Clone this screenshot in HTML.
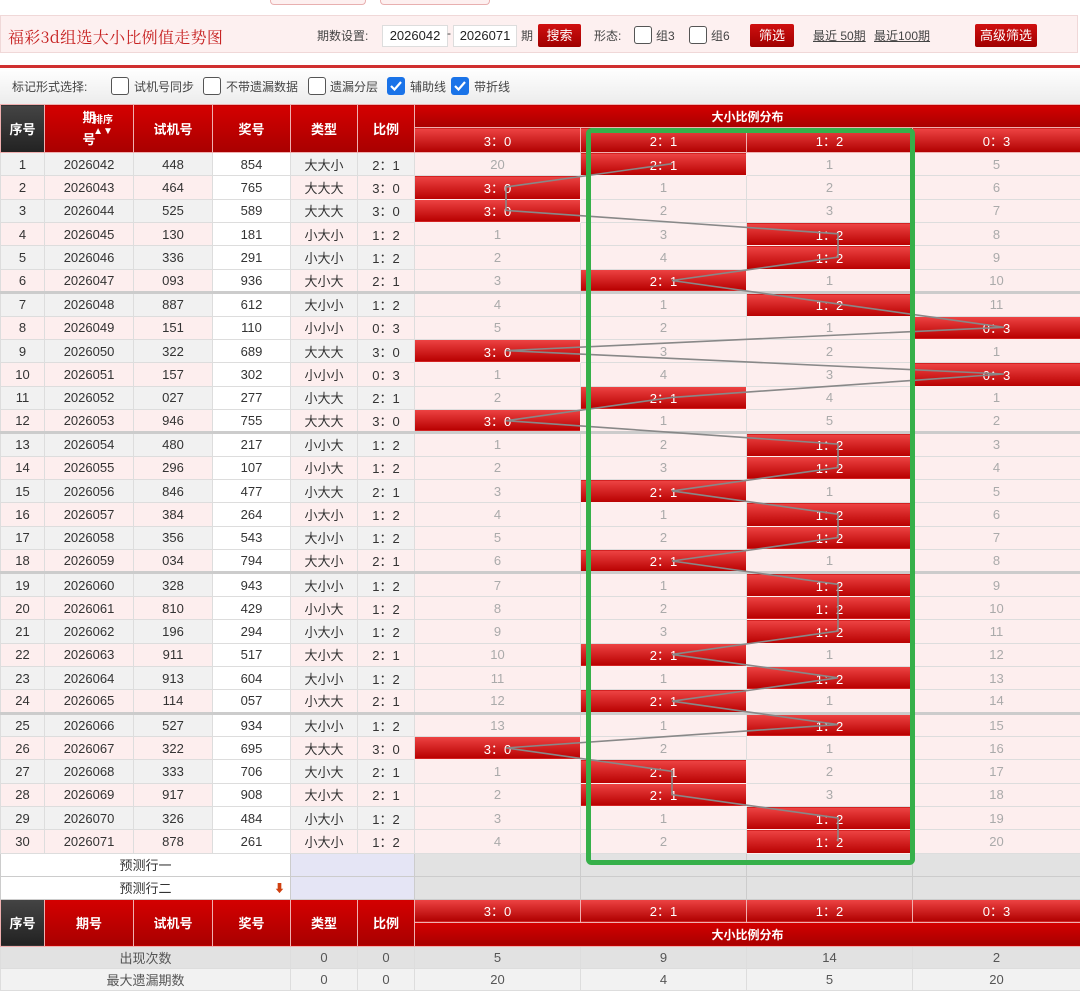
<!DOCTYPE html>
<html><head><meta charset="utf-8">
<style>
*{margin:0;padding:0;box-sizing:border-box}
body{width:1080px;height:986px;overflow:hidden;background:#fff;font-family:"Liberation Sans","Noto Sans CJK SC",sans-serif;position:relative;font-size:13px;color:#333}
.tab{position:absolute;top:0;height:5px;border:1px solid #e8b0b0;border-top:none;border-radius:0 0 4px 4px;background:#fdf0f0}
.bar{position:absolute;left:0;top:15px;width:1078px;height:38px;background:#fdf0f0;border:1px solid #f0d8d8}
.title{position:absolute;left:7px;top:9px;font-size:16px;color:#c62020;font-family:"Noto Serif CJK SC",serif;letter-spacing:0.3px}
.lbl{position:absolute;top:11px;font-size:12px;color:#444}
.inp{position:absolute;top:9px;height:22px;background:#fff;border:1px solid #ddd;font-size:13px;text-align:center;line-height:20px;color:#222}
.btn{position:absolute;top:8px;height:23px;background:linear-gradient(#d01010,#a00000);color:#fff;font-size:13px;text-align:center;line-height:23px;border-radius:2px}
.cb{position:absolute;width:18px;height:18px;border:1.5px solid #555;border-radius:3px;background:#fff}
.cbk{position:absolute;width:18px;height:18px;border-radius:3px;background:#1a73e8}
.redline{position:absolute;left:0;top:65px;width:1080px;height:3px;background:#d03030}
.mark{position:absolute;left:0;top:68px;width:1080px;height:36px;background:linear-gradient(#fff,#ececec)}
table{position:absolute;left:0;border-collapse:collapse;table-layout:fixed;width:1080px}
td{text-align:center;border:1px solid #ddd;font-size:13px;color:#333;white-space:nowrap;overflow:hidden;padding:0}
tr.o td{background:#f1f1f1}
tr.e td{background:#fdeeee}
tr td.w{background:#fff}
tr td.m{background:#fdeeee;color:#aaa}
tr td.h{background:linear-gradient(#ee4444,#b80000);color:#fff;border-color:#fdeeee}
tr.s td{border-top:3px solid #ccc}
.hd td{background:linear-gradient(#d40000,#a80000);color:#fff;font-weight:bold;font-size:13px;border:1px solid #f0b0b0}
.hd td.dk{background:linear-gradient(#444,#222)}
.hd td.sub{background:linear-gradient(#ee4444,#b00000);font-weight:normal;color:#fff}
.pr td{background:#e2e2e2;border-color:#ccc}
.pr td.wt{background:#fff;color:#333}
.pr td.lv{background:#e5e5f5}
.st td{background:#e2e2e2;color:#555}
.st2 td{background:#f2f2f2;color:#555}
</style></head><body>
<div class="tab" style="left:270px;width:96px"></div>
<div class="tab" style="left:380px;width:110px"></div>
<div class="bar">
<div class="title">福彩3d组选大小比例值走势图</div>
<div class="lbl" style="left:316px">期数设置:</div>
<div class="inp" style="left:381px;width:66px">2026042</div>
<div class="lbl" style="left:446px;top:10px">-</div>
<div class="inp" style="left:452px;width:64px">2026071</div>
<div class="lbl" style="left:520px">期</div>
<div class="btn" style="left:537px;width:43px">搜索</div>
<div class="lbl" style="left:593px">形态:</div>
<div class="cb" style="left:633px;top:10px"></div>
<div class="lbl" style="left:655px">组3</div>
<div class="cb" style="left:688px;top:10px"></div>
<div class="lbl" style="left:710px">组6</div>
<div class="btn" style="left:749px;width:44px">筛选</div>
<div class="lbl" style="left:812px;text-decoration:underline">最近 50期</div>
<div class="lbl" style="left:873px;text-decoration:underline">最近100期</div>
<div class="btn" style="left:974px;width:62px">高级筛选</div>
</div>
<div class="redline"></div>
<div class="mark">
<div class="lbl" style="left:12px;top:10px">标记形式选择:</div>
<div class="cb" style="left:111px;top:9px"></div><div class="lbl" style="left:134px;top:10px">试机号同步</div>
<div class="cb" style="left:203px;top:9px"></div><div class="lbl" style="left:226px;top:10px">不带遗漏数据</div>
<div class="cb" style="left:308px;top:9px"></div><div class="lbl" style="left:330px;top:10px">遗漏分层</div>
<div class="cbk" style="left:387px;top:9px"><svg width="18" height="18"><path d="M4 9l3.5 3.5L14 5" stroke="#fff" stroke-width="2.2" fill="none"/></svg></div><div class="lbl" style="left:410px;top:10px">辅助线</div>
<div class="cbk" style="left:451px;top:9px"><svg width="18" height="18"><path d="M4 9l3.5 3.5L14 5" stroke="#fff" stroke-width="2.2" fill="none"/></svg></div><div class="lbl" style="left:474px;top:10px">带折线</div>
</div>

<table style="top:104px">
<colgroup><col style="width:44px"><col style="width:89px"><col style="width:79px"><col style="width:78px"><col style="width:67px"><col style="width:57px"><col style="width:166px"><col style="width:166px"><col style="width:166px"><col style="width:168px"></colgroup>
<tr class="hd" style="height:23px"><td class="dk" rowspan="2">序号</td><td rowspan="2" style="position:relative;line-height:22px">期<br>号<span style="position:absolute;left:48px;top:10px;font-size:10px;line-height:11px">排序<br>▲▼</span></td><td rowspan="2">试机号</td><td rowspan="2">奖号</td><td rowspan="2">类型</td><td rowspan="2">比例</td><td colspan="4" style="font-size:12px">大小比例分布</td></tr>
<tr class="hd" style="height:25px"><td class="sub">3：0</td><td class="sub">2：1</td><td class="sub">1：2</td><td class="sub">0：3</td></tr>
<tr class="o" style="height:23.37px"><td>1</td><td>2026042</td><td>448</td><td class="w">854</td><td>大大小</td><td>2：1</td><td class="m">20</td><td class="h">2：1</td><td class="m">1</td><td class="m">5</td></tr>
<tr class="e" style="height:23.37px"><td>2</td><td>2026043</td><td>464</td><td class="w">765</td><td>大大大</td><td>3：0</td><td class="h">3：0</td><td class="m">1</td><td class="m">2</td><td class="m">6</td></tr>
<tr class="o" style="height:23.37px"><td>3</td><td>2026044</td><td>525</td><td class="w">589</td><td>大大大</td><td>3：0</td><td class="h">3：0</td><td class="m">2</td><td class="m">3</td><td class="m">7</td></tr>
<tr class="e" style="height:23.37px"><td>4</td><td>2026045</td><td>130</td><td class="w">181</td><td>小大小</td><td>1：2</td><td class="m">1</td><td class="m">3</td><td class="h">1：2</td><td class="m">8</td></tr>
<tr class="o" style="height:23.37px"><td>5</td><td>2026046</td><td>336</td><td class="w">291</td><td>小大小</td><td>1：2</td><td class="m">2</td><td class="m">4</td><td class="h">1：2</td><td class="m">9</td></tr>
<tr class="e" style="height:23.37px"><td>6</td><td>2026047</td><td>093</td><td class="w">936</td><td>大小大</td><td>2：1</td><td class="m">3</td><td class="h">2：1</td><td class="m">1</td><td class="m">10</td></tr>
<tr class="o s" style="height:23.37px"><td>7</td><td>2026048</td><td>887</td><td class="w">612</td><td>大小小</td><td>1：2</td><td class="m">4</td><td class="m">1</td><td class="h">1：2</td><td class="m">11</td></tr>
<tr class="e" style="height:23.37px"><td>8</td><td>2026049</td><td>151</td><td class="w">110</td><td>小小小</td><td>0：3</td><td class="m">5</td><td class="m">2</td><td class="m">1</td><td class="h">0：3</td></tr>
<tr class="o" style="height:23.37px"><td>9</td><td>2026050</td><td>322</td><td class="w">689</td><td>大大大</td><td>3：0</td><td class="h">3：0</td><td class="m">3</td><td class="m">2</td><td class="m">1</td></tr>
<tr class="e" style="height:23.37px"><td>10</td><td>2026051</td><td>157</td><td class="w">302</td><td>小小小</td><td>0：3</td><td class="m">1</td><td class="m">4</td><td class="m">3</td><td class="h">0：3</td></tr>
<tr class="o" style="height:23.37px"><td>11</td><td>2026052</td><td>027</td><td class="w">277</td><td>小大大</td><td>2：1</td><td class="m">2</td><td class="h">2：1</td><td class="m">4</td><td class="m">1</td></tr>
<tr class="e" style="height:23.37px"><td>12</td><td>2026053</td><td>946</td><td class="w">755</td><td>大大大</td><td>3：0</td><td class="h">3：0</td><td class="m">1</td><td class="m">5</td><td class="m">2</td></tr>
<tr class="o s" style="height:23.37px"><td>13</td><td>2026054</td><td>480</td><td class="w">217</td><td>小小大</td><td>1：2</td><td class="m">1</td><td class="m">2</td><td class="h">1：2</td><td class="m">3</td></tr>
<tr class="e" style="height:23.37px"><td>14</td><td>2026055</td><td>296</td><td class="w">107</td><td>小小大</td><td>1：2</td><td class="m">2</td><td class="m">3</td><td class="h">1：2</td><td class="m">4</td></tr>
<tr class="o" style="height:23.37px"><td>15</td><td>2026056</td><td>846</td><td class="w">477</td><td>小大大</td><td>2：1</td><td class="m">3</td><td class="h">2：1</td><td class="m">1</td><td class="m">5</td></tr>
<tr class="e" style="height:23.37px"><td>16</td><td>2026057</td><td>384</td><td class="w">264</td><td>小大小</td><td>1：2</td><td class="m">4</td><td class="m">1</td><td class="h">1：2</td><td class="m">6</td></tr>
<tr class="o" style="height:23.37px"><td>17</td><td>2026058</td><td>356</td><td class="w">543</td><td>大小小</td><td>1：2</td><td class="m">5</td><td class="m">2</td><td class="h">1：2</td><td class="m">7</td></tr>
<tr class="e" style="height:23.37px"><td>18</td><td>2026059</td><td>034</td><td class="w">794</td><td>大大小</td><td>2：1</td><td class="m">6</td><td class="h">2：1</td><td class="m">1</td><td class="m">8</td></tr>
<tr class="o s" style="height:23.37px"><td>19</td><td>2026060</td><td>328</td><td class="w">943</td><td>大小小</td><td>1：2</td><td class="m">7</td><td class="m">1</td><td class="h">1：2</td><td class="m">9</td></tr>
<tr class="e" style="height:23.37px"><td>20</td><td>2026061</td><td>810</td><td class="w">429</td><td>小小大</td><td>1：2</td><td class="m">8</td><td class="m">2</td><td class="h">1：2</td><td class="m">10</td></tr>
<tr class="o" style="height:23.37px"><td>21</td><td>2026062</td><td>196</td><td class="w">294</td><td>小大小</td><td>1：2</td><td class="m">9</td><td class="m">3</td><td class="h">1：2</td><td class="m">11</td></tr>
<tr class="e" style="height:23.37px"><td>22</td><td>2026063</td><td>911</td><td class="w">517</td><td>大小大</td><td>2：1</td><td class="m">10</td><td class="h">2：1</td><td class="m">1</td><td class="m">12</td></tr>
<tr class="o" style="height:23.37px"><td>23</td><td>2026064</td><td>913</td><td class="w">604</td><td>大小小</td><td>1：2</td><td class="m">11</td><td class="m">1</td><td class="h">1：2</td><td class="m">13</td></tr>
<tr class="e" style="height:23.37px"><td>24</td><td>2026065</td><td>114</td><td class="w">057</td><td>小大大</td><td>2：1</td><td class="m">12</td><td class="h">2：1</td><td class="m">1</td><td class="m">14</td></tr>
<tr class="o s" style="height:23.37px"><td>25</td><td>2026066</td><td>527</td><td class="w">934</td><td>大小小</td><td>1：2</td><td class="m">13</td><td class="m">1</td><td class="h">1：2</td><td class="m">15</td></tr>
<tr class="e" style="height:23.37px"><td>26</td><td>2026067</td><td>322</td><td class="w">695</td><td>大大大</td><td>3：0</td><td class="h">3：0</td><td class="m">2</td><td class="m">1</td><td class="m">16</td></tr>
<tr class="o" style="height:23.37px"><td>27</td><td>2026068</td><td>333</td><td class="w">706</td><td>大小大</td><td>2：1</td><td class="m">1</td><td class="h">2：1</td><td class="m">2</td><td class="m">17</td></tr>
<tr class="e" style="height:23.37px"><td>28</td><td>2026069</td><td>917</td><td class="w">908</td><td>大小大</td><td>2：1</td><td class="m">2</td><td class="h">2：1</td><td class="m">3</td><td class="m">18</td></tr>
<tr class="o" style="height:23.37px"><td>29</td><td>2026070</td><td>326</td><td class="w">484</td><td>小大小</td><td>1：2</td><td class="m">3</td><td class="m">1</td><td class="h">1：2</td><td class="m">19</td></tr>
<tr class="e" style="height:23.37px"><td>30</td><td>2026071</td><td>878</td><td class="w">261</td><td>小大小</td><td>1：2</td><td class="m">4</td><td class="m">2</td><td class="h">1：2</td><td class="m">20</td></tr>
<tr class="pr" style="height:23px"><td class="wt" colspan="4">预测行一</td><td class="lv" colspan="2"></td><td></td><td></td><td></td><td></td></tr>
<tr class="pr" style="height:23px"><td class="wt" colspan="4" style="position:relative">预测行二<span style="position:absolute;left:273px;top:3px;color:#d04010;font-size:11px">⬇</span></td><td class="lv" colspan="2"></td><td></td><td></td><td></td><td></td></tr>
<tr class="hd" style="height:23px"><td class="dk" rowspan="2">序号</td><td rowspan="2">期号</td><td rowspan="2">试机号</td><td rowspan="2">奖号</td><td rowspan="2">类型</td><td rowspan="2">比例</td><td class="sub">3：0</td><td class="sub">2：1</td><td class="sub">1：2</td><td class="sub">0：3</td></tr>
<tr class="hd" style="height:24px"><td colspan="4" style="font-size:12px">大小比例分布</td></tr>
<tr class="st" style="height:22px"><td colspan="4">出现次数</td><td>0</td><td>0</td><td>5</td><td>9</td><td>14</td><td>2</td></tr>
<tr class="st2" style="height:22px"><td colspan="4">最大遗漏期数</td><td>0</td><td>0</td><td>20</td><td>4</td><td>5</td><td>20</td></tr>
</table>

<svg style="position:absolute;left:0;top:0" width="1080" height="986">
<polyline fill="none" stroke="#888" stroke-width="1.6" points="672,163.7 506,187 506,210.4 838,233.8 838,257.2 672,280.5 838,303.9 1004,327.3 506,350.6 1004,374 672,397.4 506,420.7 838,444.1 838,467.5 672,490.9 838,514.2 838,537.6 672,561 838,584.3 838,607.7 838,631.1 672,654.4 838,677.8 672,701.2 838,724.6 506,747.9 672,771.3 672,794.7 838,818 838,841.4"/>
<rect x="588.5" y="130.5" width="324" height="732" rx="3" fill="none" stroke="#36b04a" stroke-width="5"/>
</svg>
</body></html>
